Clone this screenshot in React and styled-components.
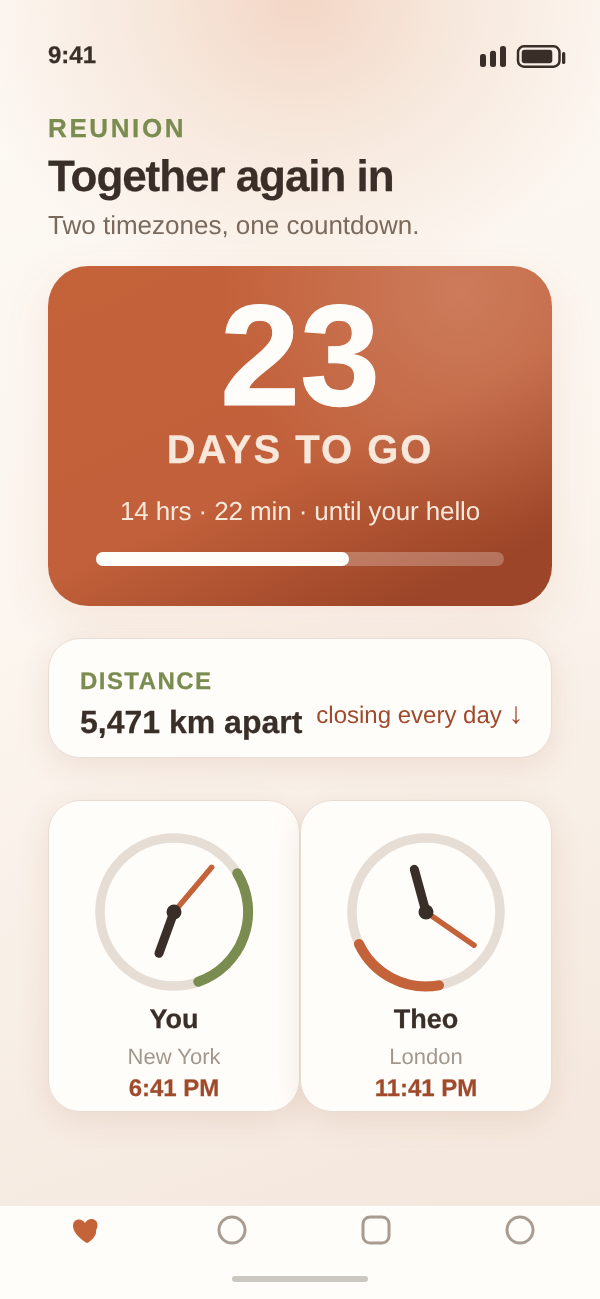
import React from "react";
import styled, { createGlobalStyle, css } from "styled-components";

const GlobalStyle = createGlobalStyle`
  html, body {
    margin: 0;
    padding: 0;
  }
  body {
    font-family: "Liberation Sans", Arial, sans-serif;
    text-rendering: geometricPrecision;
    background: #fbf4ed;
  }
`;

// bold text in the design sits a little heavier than plain Liberation Bold
const heavy = css`
  font-weight: 700;
  -webkit-text-stroke: 0.25px currentColor;
`;

const Screen = styled.div`
  width: 600px;
  height: 1299px;
  overflow: hidden;
  display: flex;
  flex-direction: column;
  background:
    radial-gradient(ellipse 340px 300px at 50% 0, rgba(241, 208, 190, 0.85) 0%, rgba(243, 220, 204, 0.65) 40%, rgba(243, 220, 204, 0) 100%),
    linear-gradient(160deg, #fdf9f4 0%, #fbf5ee 45%, #f3e5da 100%);
`;

const Content = styled.div`
  flex: 1;
  padding: 0 48px;
  display: flex;
  flex-direction: column;
  will-change: transform;
`;

const StatusBar = styled.div`
  height: 112px;
  display: flex;
  align-items: center;
  justify-content: space-between;
  color: #3a2e28;
  font-size: 24px;
  ${heavy}
`;

const StatusIcons = styled.svg`
  display: block;
  margin-right: -14px;
`;

const Eyebrow = styled.div`
  font-size: 26px;
  line-height: 32px;
  letter-spacing: 0.1em;
  color: #7a8c4f;
  ${heavy}
`;

const Title = styled.h1`
  margin: 7px 0 0;
  font-size: 44px;
  line-height: 52px;
  letter-spacing: -0.024em;
  color: #3a2e28;
  ${heavy}
`;

const Subtitle = styled.p`
  margin: 5px 0 0;
  font-size: 26px;
  line-height: 34px;
  color: #7a6a5e;
`;

const Hero = styled.section`
  margin-top: 24px;
  height: 340px;
  box-sizing: border-box;
  border-radius: 40px;
  padding: 25px 48px 0;
  display: flex;
  flex-direction: column;
  align-items: center;
  background:
    radial-gradient(circle 240px at 82% 8%, rgba(255, 255, 255, 0.17), rgba(255, 255, 255, 0) 100%),
    linear-gradient(155deg, #c4623a 0%, #c1603a 55%, #9c4528 88%);
  box-shadow: 0 16px 48px rgba(196, 98, 58, 0.1);
`;

const DayCount = styled.div`
  font-size: 144px;
  line-height: 130px;
  font-weight: 700;
  color: #fffdfa;
  -webkit-text-stroke: 1px currentColor;
`;

const DayLabel = styled.div`
  margin-top: 5px;
  font-size: 40px;
  line-height: 48px;
  letter-spacing: 0.05em;
  color: #f8e8dc;
  ${heavy}
`;

const Remaining = styled.div`
  margin-top: 20px;
  font-size: 26px;
  line-height: 34px;
  letter-spacing: -0.12px;
  color: #f8e8dc;
`;

const Track = styled.div`
  margin-top: 24px;
  width: 100%;
  height: 14px;
  border-radius: 7px;
  background: rgba(255, 253, 250, 0.25);
`;

const Fill = styled.div`
  height: 100%;
  border-radius: 7px;
  background: #fffdfa;
`;

const Card = styled.div`
  box-sizing: border-box;
  background: #fffdfa;
  border: 1px solid #e9dcd4;
  box-shadow: 0 8px 32px rgba(160, 74, 44, 0.12);
`;

const DistanceCard = styled(Card)`
  margin-top: 32px;
  height: 120px;
  border-radius: 32px;
  padding: 29px 31px 0;
`;

const DistanceLabel = styled.div`
  font-size: 24px;
  line-height: 28px;
  letter-spacing: 0.06em;
  color: #7a8c4f;
  ${heavy}
`;

const DistanceRow = styled.div`
  margin-top: 6px;
  display: flex;
  align-items: flex-start;
  gap: 14px;
  white-space: nowrap;
`;

const DistanceValue = styled.div`
  flex-shrink: 0;
  font-size: 32px;
  line-height: 40px;
  color: #3a2e28;
  ${heavy}
`;

const DistanceNote = styled.div`
  font-size: 24px;
  line-height: 28px;
  color: #a04a2c;
`;

const Arrow = styled.span`
  font-size: 30px;
  line-height: 0;
`;

const Clocks = styled.div`
  margin-top: 42px;
  display: grid;
  grid-template-columns: 1fr 1fr;
`;

const ClockCard = styled(Card)`
  height: 312px;
  border-radius: 32px;
  padding-top: 31px;
  display: flex;
  flex-direction: column;
  align-items: center;
`;

const ClockFace = styled.svg`
  display: block;
`;

const Person = styled.div`
  margin-top: 10px;
  font-size: 27px;
  line-height: 34px;
  color: #3a2e28;
  ${heavy}
`;

const City = styled.div`
  margin-top: 7px;
  font-size: 22px;
  line-height: 28px;
  color: #a3978d;
`;

const LocalTime = styled.div`
  margin-top: 1px;
  font-size: 24px;
  line-height: 34px;
  color: #a04a2c;
  ${heavy}
`;

const TabBar = styled.nav`
  height: 94px;
  box-sizing: border-box;
  background: #fffdfa;
  border-top: 1px solid #f3ebe3;
  display: grid;
  grid-template-columns: repeat(4, 144px);
  padding: 9px 16px 0;
  position: relative;
`;

const Tab = styled.div`
  height: 30px;
  display: flex;
  align-items: flex-start;
  justify-content: center;
`;

const HomeIndicator = styled.div`
  position: absolute;
  left: 232px;
  bottom: 17px;
  width: 136px;
  height: 6px;
  border-radius: 3px;
  background: #cbc7c1;
`;

const HeartIcon = styled.svg`
  display: block;
  margin: 1px 0 0 -6px;
`;

const CLOCK_CENTER = 80;

function Clock({ arc, arcColor, minute, hour }) {
  return (
    <ClockFace width="160" height="160" viewBox="0 0 160 160" fill="none" strokeLinecap="round">
      <circle cx={CLOCK_CENTER} cy={CLOCK_CENTER} r="74" stroke="#e6ddd5" strokeWidth="9.5" />
      <path d={arc} stroke={arcColor} strokeWidth="10" />
      <line x1={CLOCK_CENTER} y1={CLOCK_CENTER} x2={minute[0]} y2={minute[1]} stroke="#c4623a" strokeWidth="5.5" />
      <line x1={CLOCK_CENTER} y1={CLOCK_CENTER} x2={hour[0]} y2={hour[1]} stroke="#3a2e28" strokeWidth="9" />
      <circle cx={CLOCK_CENTER} cy={CLOCK_CENTER} r="7.5" fill="#3a2e28" />
    </ClockFace>
  );
}

const App = () => {
  return (
    <Screen>
      <GlobalStyle />
      <Content>
        <StatusBar>
          <span>9:41</span>
          <StatusIcons width="86" height="26" viewBox="0 0 86 26" fill="#3a2e28">
            <rect x="0" y="11" width="6" height="13" rx="2.5" />
            <rect x="10" y="7.7" width="6" height="16.3" rx="2.5" />
            <rect x="20" y="3" width="6" height="21" rx="2.5" />
            <rect x="38" y="3.3" width="41.5" height="20.4" rx="6" fill="none" stroke="#3a2e28" strokeWidth="2.5" />
            <rect x="41.7" y="6.7" width="30.6" height="13.6" rx="3" />
            <rect x="82" y="9" width="3.3" height="12" rx="1.6" />
          </StatusIcons>
        </StatusBar>
        <Eyebrow>REUNION</Eyebrow>
        <Title>Together again in</Title>
        <Subtitle>Two timezones, one countdown.</Subtitle>
        <Hero>
          <DayCount>23</DayCount>
          <DayLabel>DAYS TO GO</DayLabel>
          <Remaining>14 hrs · 22 min · until your hello</Remaining>
          <Track>
            <Fill style={{ width: "62%" }} />
          </Track>
        </Hero>
        <DistanceCard>
          <DistanceLabel>DISTANCE</DistanceLabel>
          <DistanceRow>
            <DistanceValue>5,471 km apart</DistanceValue>
            <DistanceNote>
              closing every day <Arrow>↓</Arrow>
            </DistanceNote>
          </DistanceRow>
        </DistanceCard>
        <Clocks>
          <ClockCard>
            <Clock
              arc="M143.3 41.3 A74 74 0 0 1 104.3 149.7"
              arcColor="#7a8c4f"
              minute={[117.7, 35.3]}
              hour={[65, 121.3]}
            />
            <Person>You</Person>
            <City>New York</City>
            <LocalTime>6:41 PM</LocalTime>
          </ClockCard>
          <ClockCard>
            <Clock
              arc="M13 112 A74 74 0 0 0 93 153.3"
              arcColor="#c4623a"
              minute={[128, 113.3]}
              hour={[68.3, 37.3]}
            />
            <Person>Theo</Person>
            <City>London</City>
            <LocalTime>11:41 PM</LocalTime>
          </ClockCard>
        </Clocks>
      </Content>
      <TabBar>
        <Tab>
          <HeartIcon width="28" height="28" viewBox="0 0 28 28">
            <path
              d="M15.5 27 C10 23 2 17 2 10 C2 5.5 5 3.5 8 3.5 C10.5 3.5 12.5 4.8 14 7 C15.5 4.5 18 3 20.5 3 C24 3 26.5 5.5 26.5 9 C26.5 11.5 25.5 13.5 25 14.5 C25.8 17 24 20 22 22.5 C19.5 25 17 27 15.5 27 Z"
              fill="#c4623a"
            />
          </HeartIcon>
        </Tab>
        <Tab>
          <svg width="30" height="30" viewBox="0 0 30 30" fill="none">
            <circle cx="15" cy="15" r="13" stroke="#a89b8f" strokeWidth="3" />
          </svg>
        </Tab>
        <Tab>
          <svg width="30" height="30" viewBox="0 0 30 30" fill="none">
            <rect x="2" y="2" width="26" height="26" rx="7" stroke="#a89b8f" strokeWidth="3" />
          </svg>
        </Tab>
        <Tab>
          <svg width="30" height="30" viewBox="0 0 30 30" fill="none">
            <circle cx="15" cy="15" r="13" stroke="#a89b8f" strokeWidth="3" />
          </svg>
        </Tab>
        <HomeIndicator />
      </TabBar>
    </Screen>
  );
};

export default App;
